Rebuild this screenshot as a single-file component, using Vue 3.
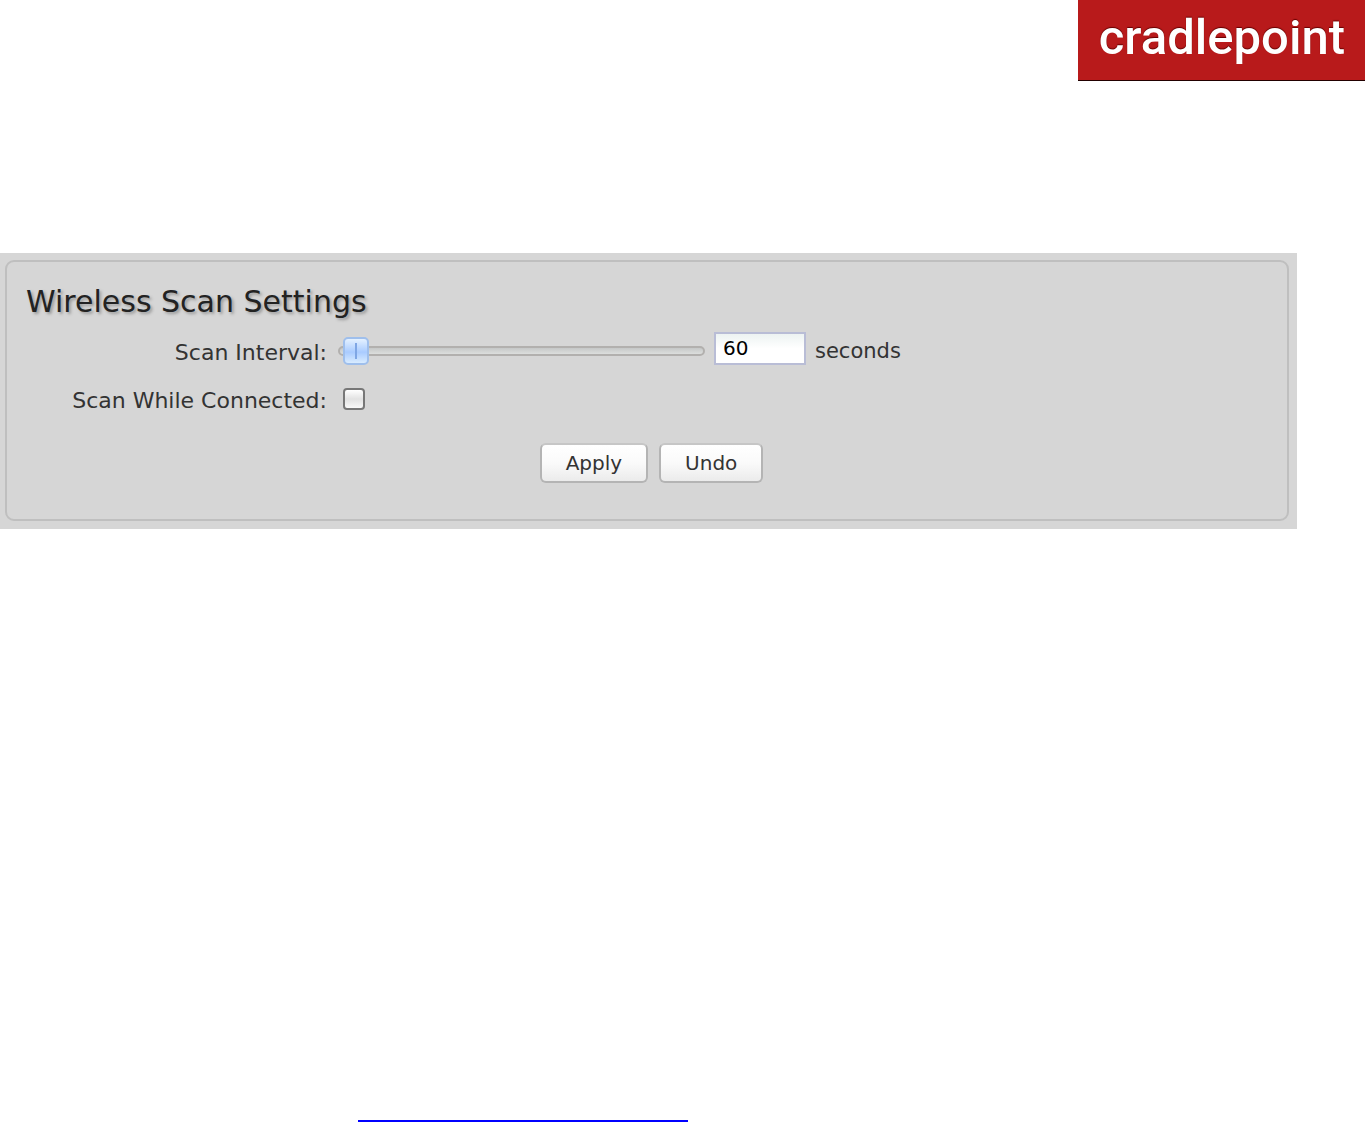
<script setup>
import { ref } from 'vue'

const initial = { interval: 60, whileConnected: false }
const interval = ref(initial.interval)
const whileConnected = ref(initial.whileConnected)

function apply() {
  initial.interval = interval.value
  initial.whileConnected = whileConnected.value
}

function undo() {
  interval.value = initial.interval
  whileConnected.value = initial.whileConnected
}
</script>

<template>
  <div class="page">
    <header class="header">
      <div class="brand">cradlepoint</div>
    </header>

    <main class="panel">
      <form class="settings" @submit.prevent="apply">
        <h1 class="title">Wireless Scan Settings</h1>

        <div class="fields">
          <label class="label" for="interval">Scan Interval:</label>
          <div class="control">
            <input
              id="interval"
              v-model.number="interval"
              class="slider"
              type="range"
              min="30"
              max="3600"
            />
            <input
              id="interval-value"
              v-model.number="interval"
              class="number"
              type="text"
              aria-labelledby="interval-unit"
            />
            <label id="interval-unit" class="unit" for="interval-value">seconds</label>
          </div>

          <label class="label" for="connected">Scan While Connected:</label>
          <div class="control">
            <input id="connected" v-model="whileConnected" class="check" type="checkbox" />
          </div>
        </div>

        <div class="actions">
          <button class="button" type="submit">Apply</button>
          <button class="button" type="button" @click="undo">Undo</button>
        </div>
      </form>
    </main>

    <footer class="footer">
      <a class="footer-link" href="#"></a>
    </footer>
  </div>
</template>

<style>
body {
  margin: 0;
  background: #fff;
}
</style>

<style scoped>
.page {
  display: flex;
  flex-direction: column;
  min-height: 100vh;
  font-family: Verdana, "DejaVu Sans", sans-serif;
  color: #333;
}

.header {
  display: flex;
  justify-content: flex-end;
}

.brand {
  box-sizing: border-box;
  height: 81px;
  padding: 0 20px 0 21px;
  border-bottom: 1px solid #200;
  background: #b81a1b;
  color: #fff;
  font-family: Roboto, sans-serif;
  font-size: 49px;
  font-weight: 500;
  line-height: 76px;
  text-shadow: 0 -1px 1px #600;
}

.panel {
  margin: 172px 68px 0 0;
  padding: 7px 8px 8px 5px;
  background: #d6d6d6;
}

.settings {
  padding: 22px 10px 36px 19px;
  border: 2px solid #bfbfbf;
  border-radius: 9px;
}

.title {
  margin: 0 0 7px;
  color: #222;
  font-size: 30px;
  font-weight: 400;
  line-height: 36px;
  text-shadow: 2px 2px 3px #999;
}

.fields {
  display: grid;
  grid-template-columns: 301px 1fr;
  grid-auto-rows: 48px;
  column-gap: 11px;
  align-items: center;
}

.label {
  padding-top: 4px;
  font-size: 22px;
  line-height: 28px;
  text-align: right;
}

.control {
  display: flex;
  align-items: center;
}

.slider {
  appearance: none;
  width: 367px;
  height: 28px;
  margin: 0;
  background: transparent;
}

.slider::-webkit-slider-runnable-track {
  box-sizing: border-box;
  height: 10px;
  border: 2px solid #b2b0ae;
  border-radius: 5px;
  background: linear-gradient(#c6c8c8, #dcdedd);
}

.slider::-webkit-slider-thumb {
  appearance: none;
  box-sizing: border-box;
  width: 26px;
  height: 28px;
  margin-top: -11px;
  border: 2px solid #9fbfec;
  border-radius: 5px;
  background:
    linear-gradient(#7fa6e4, #7fa6e4) center / 2px 16px no-repeat,
    linear-gradient(#e4f1ff, #a9cbff 55%, #d9ecff);
}

.number {
  box-sizing: border-box;
  width: 92px;
  height: 33px;
  margin: 0 9px 6px;
  padding: 0 7px;
  border: 2px solid #b9bdd6;
  background: linear-gradient(#edf3f2, #fff 50%);
  color: #000;
  font-family: inherit;
  font-size: 20px;
}

.unit {
  font-size: 21px;
  line-height: 28px;
}

.check {
  appearance: none;
  box-sizing: border-box;
  width: 22px;
  height: 22px;
  margin: 0 0 0 5px;
  border: 2px solid #777;
  border-radius: 4px;
  background: linear-gradient(#fff, #e2e2e2 50%, #f8f8f8);
}

.check:checked {
  background: #7fa6e4;
}

.actions {
  display: flex;
  justify-content: center;
  gap: 11px;
  margin-top: 20px;
}

.button {
  height: 40px;
  padding: 0 24px;
  border: 2px solid #b4b4b4;
  border-top-color: #c6c6c6;
  border-radius: 6px;
  background: linear-gradient(#fff, #fafafa 50%, #ebebeb);
  color: #333;
  font-family: inherit;
  font-size: 20px;
}

.footer {
  margin-top: auto;
  padding-left: 358px;
}

.footer-link {
  display: block;
  width: 330px;
  max-width: 100%;
  border-bottom: 2px solid #00f;
}
</style>
